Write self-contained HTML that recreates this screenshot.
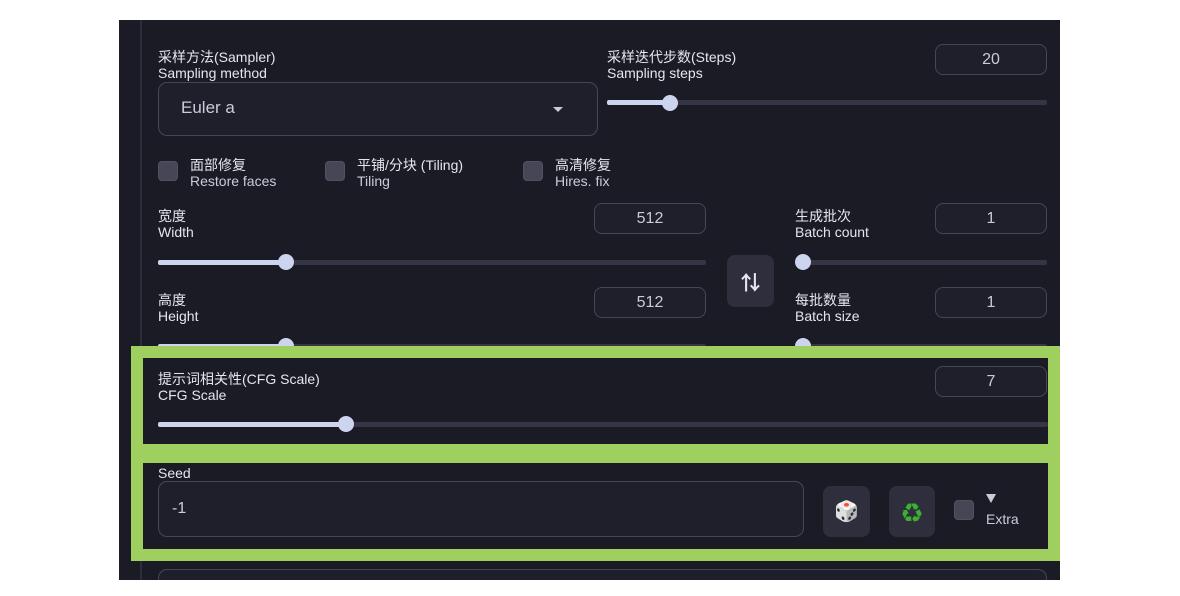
<!DOCTYPE html>
<html><head><meta charset="utf-8"><style>
*{margin:0;padding:0;box-sizing:border-box}
body{width:1180px;height:596px;background:#fff;position:relative;overflow:hidden;font-family:"Liberation Sans","Noto Sans CJK SC",sans-serif;color:#e4e6ef}
.a{position:absolute}
#page{left:119px;top:20px;width:941px;height:560px;background:#1b1b25;overflow:hidden}
.vl{left:140px;top:20px;width:2px;height:560px;background:#2c2c3a}
.lbl{position:absolute;font-size:14px;line-height:16px;white-space:nowrap;color:#e4e6ef}
.num{position:absolute;border:1px solid #464656;border-radius:8px;background:#1f1f2b;color:#c9ccd8;font-size:16px;text-align:center}
.trk{position:absolute;height:5px;background:#353546;border-radius:2px}
.fill{position:absolute;height:5px;background:#cdd4f0;border-radius:2px}
.thumb{position:absolute;width:16px;height:16px;border-radius:50%;background:#cdd4f0}
.cb{position:absolute;width:20px;height:20px;border-radius:4px;background:#464656;border:1px solid #52525f}
.btn{position:absolute;background:#2e2e3d;border-radius:8px;display:flex;align-items:center;justify-content:center}
.g{position:absolute;background:#9fcf5f}
</style></head><body>
<div id="page" class="a"><div class="a" style="left:39px;top:549px;width:889px;height:30px;border:1px solid #464656;border-radius:9px;background:#1f1f2c"></div></div>
<div class="a vl"></div>

<div class="lbl" style="left:158px;top:49px">采样方法(Sampler)<br>Sampling method</div>
<div class="a" style="left:158px;top:82px;width:440px;height:54px;border:1px solid #464656;border-radius:9px;background:#1f1f2c"></div>
<div class="a" style="left:181px;top:98px;font-size:17px;color:#c9ccd8">Euler a</div>
<div class="a" style="left:553px;top:107px;width:0;height:0;border-left:5px solid transparent;border-right:5px solid transparent;border-top:5px solid #c9ccd8"></div>

<div class="lbl" style="left:607px;top:49px">采样迭代步数(Steps)<br>Sampling steps</div>
<div class="num" style="left:935px;top:44px;width:112px;height:31px;line-height:29px">20</div>
<div class="trk" style="left:607px;top:100px;width:440px"></div>
<div class="fill" style="left:607px;top:100px;width:63px"></div>
<div class="thumb" style="left:662px;top:95px"></div>

<div class="cb" style="left:158px;top:161px"></div>
<div class="lbl" style="left:190px;top:157px">面部修复<br><span style="color:#c9ccd8">Restore faces</span></div>
<div class="cb" style="left:325px;top:161px"></div>
<div class="lbl" style="left:357px;top:157px">平铺/分块 (Tiling)<br><span style="color:#c9ccd8">Tiling</span></div>
<div class="cb" style="left:523px;top:161px"></div>
<div class="lbl" style="left:555px;top:157px">高清修复<br><span style="color:#c9ccd8">Hires. fix</span></div>

<div class="lbl" style="left:158px;top:208px">宽度<br>Width</div>
<div class="num" style="left:594px;top:203px;width:112px;height:31px;line-height:29px">512</div>
<div class="trk" style="left:158px;top:260px;width:548px"></div>
<div class="fill" style="left:158px;top:260px;width:128px"></div>
<div class="thumb" style="left:278px;top:254px"></div>

<div class="lbl" style="left:158px;top:292px">高度<br>Height</div>
<div class="num" style="left:594px;top:287px;width:112px;height:31px;line-height:29px">512</div>
<div class="trk" style="left:158px;top:344px;width:548px"></div>
<div class="fill" style="left:158px;top:344px;width:128px"></div>
<div class="thumb" style="left:278px;top:338px"></div>

<div class="btn" style="left:727px;top:255px;width:47px;height:52px;color:#e4e6ef;font-size:20px;font-weight:bold">⇅</div>

<div class="lbl" style="left:795px;top:208px">生成批次<br>Batch count</div>
<div class="num" style="left:935px;top:203px;width:112px;height:31px;line-height:29px">1</div>
<div class="trk" style="left:795px;top:260px;width:252px"></div>
<div class="thumb" style="left:795px;top:254px"></div>

<div class="lbl" style="left:795px;top:292px">每批数量<br>Batch size</div>
<div class="num" style="left:935px;top:287px;width:112px;height:31px;line-height:29px">1</div>
<div class="trk" style="left:795px;top:344px;width:252px"></div>
<div class="thumb" style="left:795px;top:338px"></div>

<!-- green frame -->
<div class="g" style="left:131px;top:346px;width:929px;height:12px"></div>
<div class="g" style="left:131px;top:444px;width:929px;height:19px"></div>
<div class="g" style="left:131px;top:549px;width:929px;height:12px"></div>
<div class="g" style="left:131px;top:346px;width:12px;height:215px"></div>
<div class="g" style="left:1048px;top:346px;width:12px;height:215px"></div>

<div class="lbl" style="left:158px;top:371px">提示词相关性(CFG Scale)<br>CFG Scale</div>
<div class="num" style="left:935px;top:366px;width:112px;height:31px;line-height:29px">7</div>
<div class="trk" style="left:158px;top:422px;width:890px"></div>
<div class="fill" style="left:158px;top:422px;width:188px"></div>
<div class="thumb" style="left:338px;top:416px"></div>

<div class="lbl" style="left:158px;top:465px">Seed</div>
<div class="a" style="left:158px;top:481px;width:646px;height:56px;border:1px solid #464656;border-radius:9px;background:#1f1f2c"></div>
<div class="a" style="left:172px;top:500px;font-size:16px;color:#c9ccd8">-1</div>
<div class="btn" style="left:823px;top:486px;width:47px;height:51px;font-size:20px">🎲</div>
<div class="btn" style="left:889px;top:486px;width:46px;height:51px;font-size:20px;color:#3cb030">♻</div>
<div class="cb" style="left:954px;top:500px"></div>
<div class="a" style="left:986px;top:494px;width:0;height:0;border-left:5px solid transparent;border-right:5px solid transparent;border-top:9px solid #c9ccd8"></div>
<div class="a" style="left:986px;top:511px;font-size:14px;color:#c9ccd8">Extra</div>
</body></html>
